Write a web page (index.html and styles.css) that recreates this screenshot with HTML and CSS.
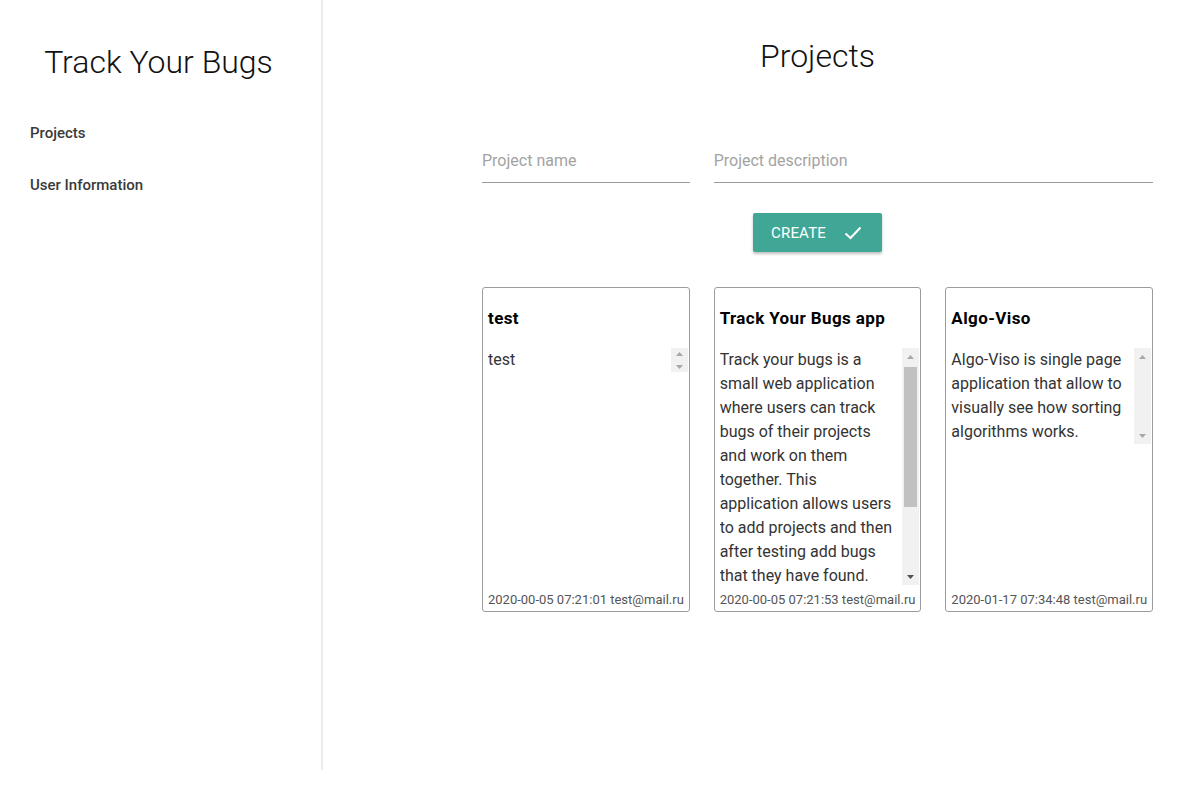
FILE: index.html
```html
<!DOCTYPE html>
<html lang="en">
<head>
<meta charset="utf-8">
<title>Track Your Bugs</title>
<link rel="stylesheet" href="styles.css">
</head>
<body>
<div class="app">
  <aside class="sidebar">
    <h1 class="brand">Track Your Bugs</h1>
    <nav class="nav">
      <a class="nav-item" href="#">Projects</a>
      <a class="nav-item" href="#">User Information</a>
    </nav>
  </aside>
  <main class="main">
    <div class="content">
      <h2 class="page-title">Projects</h2>
      <form class="create-form">
        <input class="field field-name" type="text" placeholder="Project name">
        <input class="field field-desc" type="text" placeholder="Project description">
      </form>
      <div class="actions">
        <button class="btn-create" type="button">CREATE
          <svg class="check" width="18" height="14" viewBox="0 0 18 14"><path d="M1.5 7.5 L6.5 12 L16.5 1.5" fill="none" stroke="#fff" stroke-width="2"/></svg>
        </button>
      </div>
      <div class="cards">
        <div class="card">
          <h3 class="card-title">test</h3>
          <div class="desc-box">
            <div class="desc-text">test</div>
            <div class="scrollbar">
              <div class="sb-btn"><svg width="7" height="4" viewBox="0 0 7 4"><path d="M0 4 L3.5 0 L7 4Z" fill="#a8a8a8"/></svg></div>
              <div class="sb-track"></div>
              <div class="sb-btn"><svg width="7" height="4" viewBox="0 0 7 4"><path d="M0 0 L3.5 4 L7 0Z" fill="#a8a8a8"/></svg></div>
            </div>
          </div>
          <div class="card-meta">2020-00-05 07:21:01 test@mail.ru</div>
        </div>
        <div class="card">
          <h3 class="card-title">Track Your Bugs app</h3>
          <div class="desc-box">
            <div class="desc-text">Track your bugs is a small web application where users can track bugs of their projects and work on them together. This application allows users to add projects and then after testing add bugs that they have found. Other users can take these bugs and mark them as solved.</div>
            <div class="scrollbar">
              <div class="sb-btn"><svg width="7" height="4" viewBox="0 0 7 4"><path d="M0 4 L3.5 0 L7 4Z" fill="#a8a8a8"/></svg></div>
              <div class="sb-track"><div class="sb-thumb" style="height: 140px"></div></div>
              <div class="sb-btn"><svg width="7" height="4" viewBox="0 0 7 4"><path d="M0 0 L3.5 4 L7 0Z" fill="#505050"/></svg></div>
            </div>
          </div>
          <div class="card-meta">2020-00-05 07:21:53 test@mail.ru</div>
        </div>
        <div class="card">
          <h3 class="card-title">Algo-Viso</h3>
          <div class="desc-box">
            <div class="desc-text">Algo-Viso is single page application that allow to visually see how sorting algorithms works.</div>
            <div class="scrollbar">
              <div class="sb-btn"><svg width="7" height="4" viewBox="0 0 7 4"><path d="M0 4 L3.5 0 L7 4Z" fill="#a8a8a8"/></svg></div>
              <div class="sb-track"></div>
              <div class="sb-btn"><svg width="7" height="4" viewBox="0 0 7 4"><path d="M0 0 L3.5 4 L7 0Z" fill="#a8a8a8"/></svg></div>
            </div>
          </div>
          <div class="card-meta">2020-01-17 07:34:48 test@mail.ru</div>
        </div>
      </div>
    </div>
  </main>
</div>
</body>
</html>
```
FILE: styles.css
```css
* { box-sizing: border-box; }
html, body { margin: 0; padding: 0; background: #fff; }
body { font-family: Roboto, "Noto Sans", Arial, sans-serif; color: #222; }

.app { display: flex; align-items: flex-start; }

.sidebar {
  width: 323px;
  height: 770px;
  flex: none;
  border-right: 2px solid #ebebeb;
}
.brand {
  margin: 42px 0 0 0;
  font-size: 32px;
  line-height: 40px;
  font-weight: 300;
  color: #111;
  text-align: center;
  padding-right: 4px;
}
.nav { display: flex; flex-direction: column; gap: 32px; margin-top: 41px; padding-left: 30px; }
.nav-item {
  font-size: 15px;
  line-height: 20px;
  font-weight: 500;
  color: #3a3a3a;
  text-decoration: none;
}

.main { flex: 1; padding-left: 159px; }
.content { width: 671px; }
.page-title {
  margin: 36px 0 0 0;
  font-size: 32px;
  line-height: 40px;
  font-weight: 300;
  color: #111;
  text-align: center;
}
.create-form {
  display: grid;
  grid-template-columns: repeat(3, 1fr);
  column-gap: 24px;
  margin-top: 66px;
}
.field {
  height: 41px;
  border: none;
  border-bottom: 1px solid #9a9a9a;
  padding: 0 0 3px 0;
  font: 16px Roboto, "Noto Sans", sans-serif;
  color: #333;
  outline: none;
  background: transparent;
}
.field::placeholder { color: #a3a3a3; }
.field-desc { grid-column: 2 / 4; }

.actions { display: flex; justify-content: center; margin-top: 30px; }
.btn-create {
  display: flex;
  align-items: center;
  gap: 18px;
  height: 39px;
  padding: 0 20px 0 18px;
  border: none;
  border-radius: 2px;
  background: #40a797;
  color: #fff;
  font: 15px Roboto, "Noto Sans", sans-serif;
  letter-spacing: 0.2px;
  box-shadow: 0 2px 3px rgba(0,0,0,0.25);
}
.check { display: block; }

.cards {
  display: grid;
  grid-template-columns: repeat(3, 1fr);
  column-gap: 24px;
  margin-top: 35px;
}
.card {
  height: 325px;
  border: 1px solid #9c9c9c;
  border-radius: 3px;
  padding: 20px 1px 3px 5px;
  display: flex;
  flex-direction: column;
}
.card-title {
  margin: 0;
  font-size: 17px;
  line-height: 20px;
  font-weight: 700;
  letter-spacing: 0.4px;
  color: #000;
}
.desc-box {
  display: flex;
  margin-top: 20px;
  max-height: 237px;
}
.desc-text {
  flex: 1;
  min-width: 0;
  overflow: hidden;
  padding-right: 5px;
  font-size: 16px;
  line-height: 24px;
  color: #333;
}
.scrollbar {
  flex: none;
  width: 17px;
  contain: size;
  background: #f1f1f1;
  display: flex;
  flex-direction: column;
}
.sb-btn {
  flex: 0 1 17px;
  min-height: 0;
  display: flex;
  align-items: center;
  justify-content: center;
  overflow: hidden;
}
.sb-btn svg { display: block; flex: none; }
.sb-track {
  flex: 1 1 0;
  min-height: 0;
  padding: 2px 2px 0 2px;
}
.sb-thumb { background: #c1c1c1; }
.card-meta {
  margin-top: auto;
  font-size: 13px;
  line-height: 16px;
  color: #555;
  white-space: nowrap;
}
```
